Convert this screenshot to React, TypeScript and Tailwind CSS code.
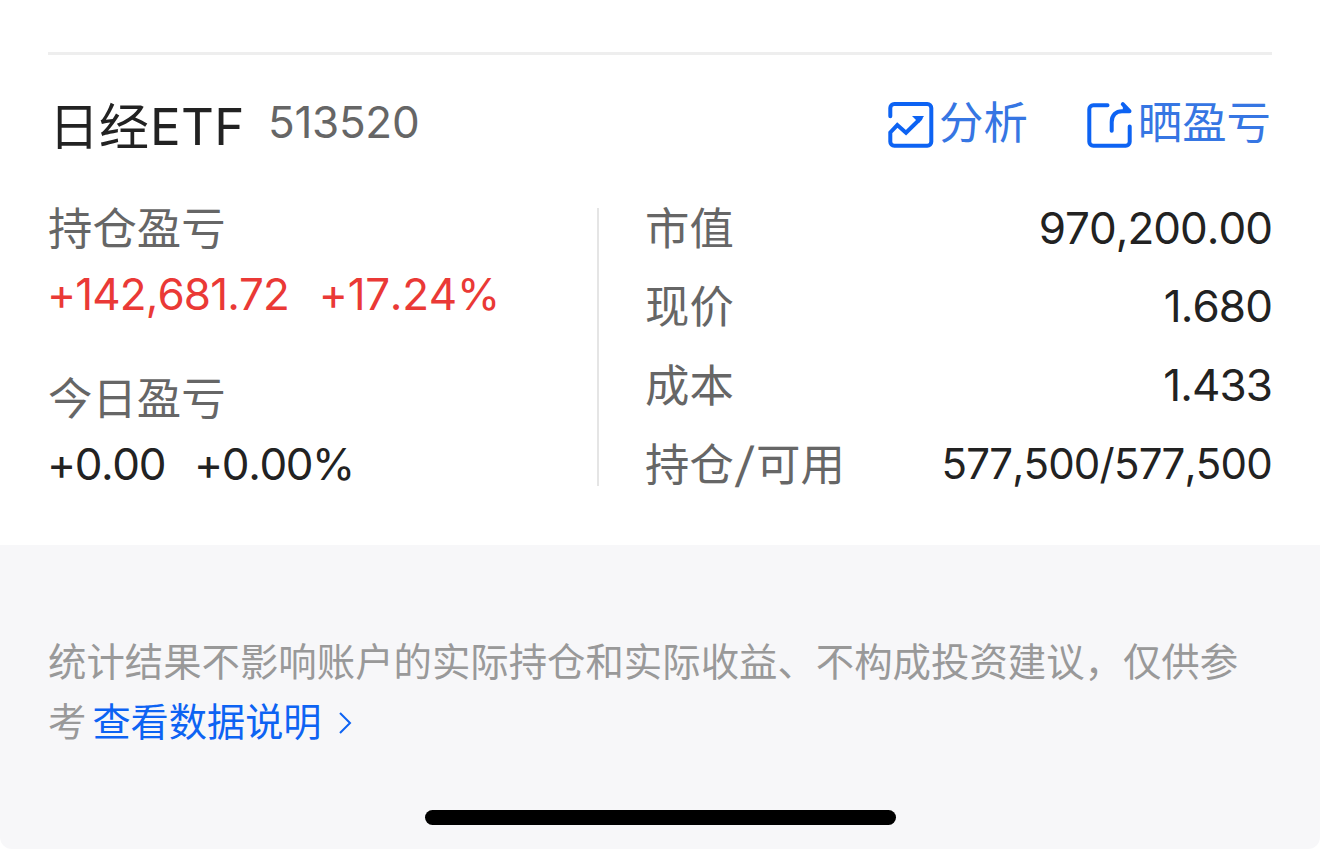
import type { ReactNode } from "react";

function AnalysisIcon() {
  return (
    <svg className="mt-[7px] h-[50px] w-[50px] shrink-0" viewBox="0 0 50 50" fill="none">
      <path
        d="M4.300 16.200V8a4 4 0 0 1 4-4h33a4 4 0 0 1 4 4v33.700a4 4 0 0 1-4 4h-33a4 4 0 0 1-4-4V32.500l7-7.400 8.700 7.600L34.500 18.500"
        stroke="#0d63f3"
        strokeWidth="4"
        strokeLinecap="round"
        strokeLinejoin="miter"
      />
      <path d="M26 16.100h12L33 23z" fill="#0d63f3" />
    </svg>
  );
}

function ShareIcon() {
  return (
    <svg className="mt-[7px] h-[50px] w-[50px] shrink-0" viewBox="0 0 50 50" fill="none">
      <g stroke="#0d63f3" strokeWidth="4" strokeLinecap="round" strokeLinejoin="round">
        <path d="M22.500 5.200H8.300a4 4 0 0 0-4 4V41.700a4 4 0 0 0 4 4h32.400a4 4 0 0 0 4-4V26.500" />
        <path d="M26.700 30.800V22C26.700 15 31 11.200 37 11.200h7.500L37.800 4.200" />
      </g>
      <path d="M37.800 4.200l6.700 7H37.800z" fill="#0d63f3" />
    </svg>
  );
}

function Stat({ label, children }: { label: ReactNode; children: ReactNode }) {
  return (
    <div className="flex h-[60px] items-start justify-between last:mt-px">
      <span className="pt-px text-[#666666]">{label}</span>
      {children}
    </div>
  );
}

export default function App() {
  return (
    <div className="h-[849px] w-[1320px] overflow-hidden bg-white font-['Inter','Noto_Sans_CJK_SC',sans-serif] font-[370] [font-kerning:none] whitespace-nowrap text-[#222222]">
      <main className="h-[545px] px-12 pt-[52px]">
        <div className="h-[3px] bg-[#eeeeee]" />
        <header className="flex h-[143px] items-start justify-between">
          <div className="flex items-start">
            <h1 className="mt-[42px] w-[220px] pl-px text-[50px] leading-[60px] font-normal">
              日经<span className="ml-px text-[51px] tracking-[0.300px]">ETF</span>
            </h1>
            <span className="mt-[37px] text-[44px] leading-[60px] tracking-[-0.300px] text-[#666666]">
              513520
            </span>
          </div>
          <div className="mt-[38px] mr-px flex text-[44.400px] leading-[60px] text-[#3676e3]">
            <button className="mr-[57px] flex items-start gap-[3px]">
              <AnalysisIcon />
              <span>分析</span>
            </button>
            <button className="flex items-start gap-[3px]">
              <ShareIcon />
              <span>晒盈亏</span>
            </button>
          </div>
        </header>
        <section className="flex text-[44.400px] leading-[60px]">
          <div className="w-[549px] text-[44px]">
            <div className="pt-px text-[44.400px] text-[#666666]">持仓盈亏</div>
            <div className="mt-[5px] -ml-px flex gap-[30px] text-[#ea3936]">
              <span className="tracking-[-0.900px]">+142,681.72</span>
              <span className="tracking-[-0.300px]">+17.24%</span>
            </div>
            <div className="mt-[44px] pt-px text-[44.400px] text-[#666666]">今日盈亏</div>
            <div className="mt-[5px] -ml-px flex gap-[29px] tracking-[-1.400px]">
              <span>+0.00</span>
              <span>+0.00%</span>
            </div>
          </div>
          <div className="mt-[10px] h-[278px] w-[2px] bg-[#e5e5e5]" />
          <div className="ml-[46px] flex flex-1 flex-col gap-[18.400px]">
            <Stat label="市值">
              <span className="text-[44px] tracking-[-1px]">970,200.00</span>
            </Stat>
            <Stat label="现价">
              <span className="text-[44px] tracking-[-0.900px]">1.680</span>
            </Stat>
            <Stat label="成本">
              <span className="text-[44px] tracking-[-0.900px]">1.433</span>
            </Stat>
            <Stat
              label={
                <>
                  持仓
                  <span className="mr-[3px] ml-[2px] inline-block h-[60px] -skew-x-6 align-top text-[48px]">
                    /
                  </span>
                  可用
                </>
              }
            >
              <span className="text-[42px] tracking-[-0.800px]">577,500/577,500</span>
            </Stat>
          </div>
        </section>
      </main>
      <footer className="flex h-[304px] flex-col rounded-b-[12px] bg-[#f7f7f9] px-12 pt-[87px] text-[38.400px] leading-[60px] text-[#999999]">
        <p>统计结果不影响账户的实际持仓和实际收益、不构成投资建议，仅供参</p>
        <div className="flex">
          <span>考</span>
          <a className="ml-[6px] flex items-center text-[38.200px] text-[#0d63f3]">
            查看数据说明
            <svg className="mt-[2px] ml-[16px] h-6 w-[14px]" viewBox="0 0 14 24" fill="none">
              <path d="M2 2l10 10L2 22" stroke="#0d63f3" strokeWidth="2" />
            </svg>
          </a>
        </div>
        <div className="mt-[58px] h-[15px] w-[471px] self-center rounded-full bg-black" />
      </footer>
    </div>
  );
}
